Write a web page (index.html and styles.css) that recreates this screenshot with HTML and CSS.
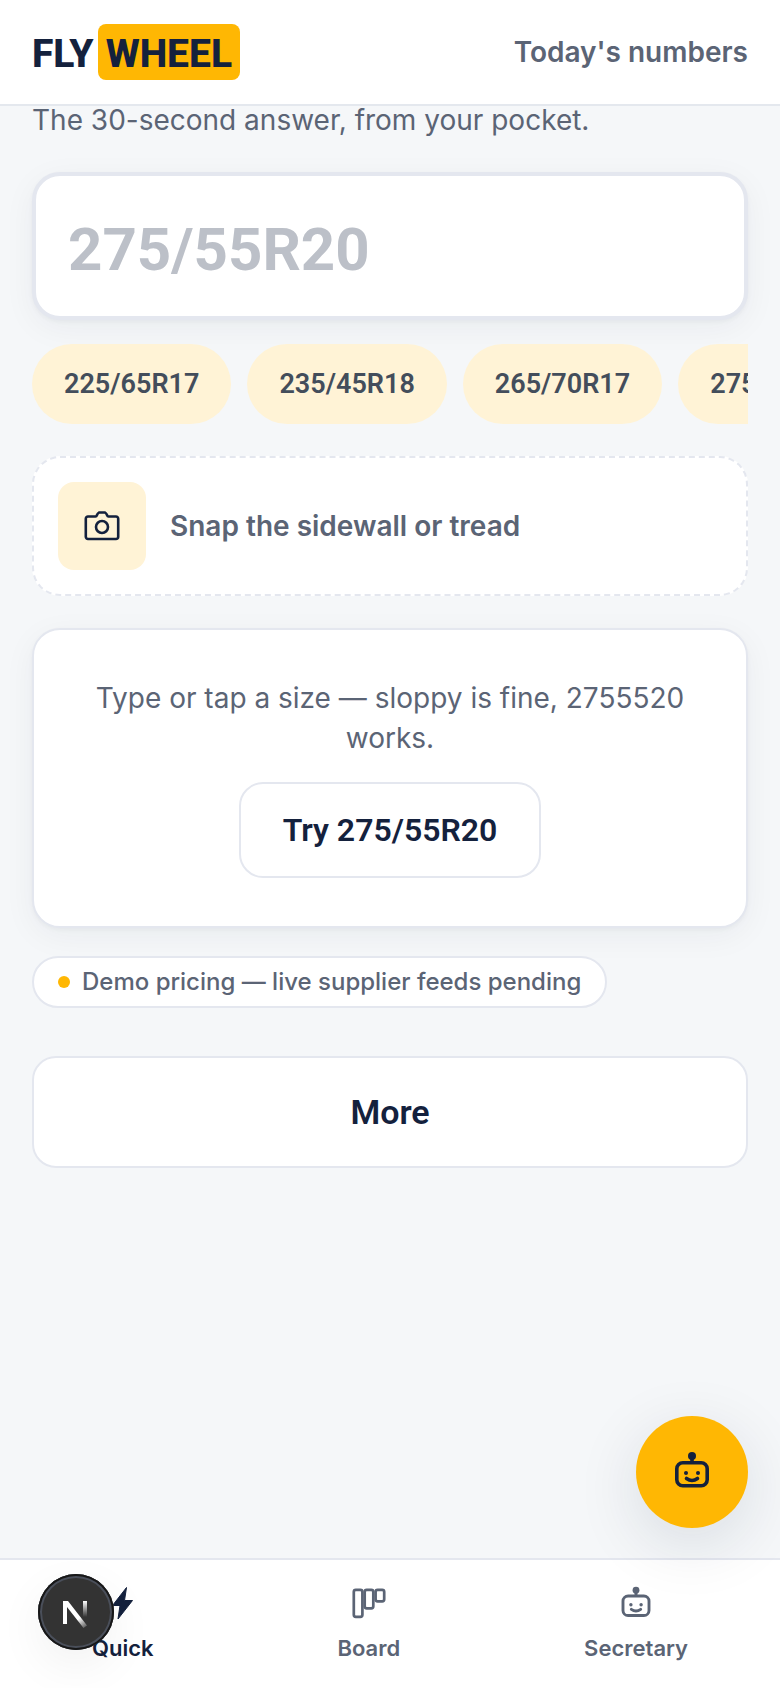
FILE: index.html
```html
<!DOCTYPE html>
<html lang="en">
<head>
    <meta charset="UTF-8">
    <meta name="viewport" content="width=device-width, initial-scale=1.0">
    <title>Flywheel</title>
    <link rel="stylesheet" href="styles.css">
</head>
<body>
    <header class="topbar">
        <a href="#" class="logo">FLY<span class="logo-mark">WHEEL</span></a>
        <a href="#numbers" class="topbar-link">Today's numbers</a>
    </header>

    <main class="content">
        <p class="tagline">The 30-second answer, from your pocket.</p>

        <input type="text" id="size" name="size" class="size-input" placeholder="275/55R20" aria-label="Tire size" autocomplete="off">

        <div class="chips">
            <button type="button" class="chip">225/65R17</button>
            <button type="button" class="chip">235/45R18</button>
            <button type="button" class="chip">265/70R17</button>
            <button type="button" class="chip">275/55R20</button>
        </div>

        <button type="button" class="snap">
            <span class="snap-icon">
                <svg width="40" height="40" viewBox="0 0 40 40" fill="none" stroke="currentColor" stroke-width="2.600" stroke-linejoin="round" aria-hidden="true">
                    <path d="M6 10.500h7.500q1 0 1.500-1.500t2-2.500h6q1.500 1 2 2.500t1.500 1.500H34a2.200 2.200 0 0 1 2.200 2.200v18A2.200 2.200 0 0 1 34 33H6a2.200 2.200 0 0 1-2.200-2.200v-18A2.200 2.200 0 0 1 6 10.500z"/>
                    <circle cx="20" cy="21" r="6"/>
                </svg>
            </span>
            Snap the sidewall or tread
        </button>

        <section class="card">
            <p>Type or tap a size — sloppy is fine, 2755520 works.</p>
            <button type="button" class="btn btn-try">Try 275/55R20</button>
        </section>

        <div class="status"><span class="dot"></span>Demo pricing — live supplier feeds pending</div>

        <button type="button" class="btn btn-more">More</button>
    </main>

    <nav class="tabbar">
        <a href="#quick" class="tab active">
            <svg width="34" height="34" viewBox="0 0 34 34" fill="currentColor" stroke="currentColor" stroke-linejoin="round" aria-hidden="true">
                <path d="M20.500 1.500L6.500 19.500h7.500l-2 13.500L26.500 14.500h-8z"/>
            </svg>
            Quick
        </a>
        <a href="#board" class="tab">
            <svg width="34" height="34" viewBox="0 0 34 34" fill="none" stroke="currentColor" stroke-width="2.700" aria-hidden="true">
                <rect x="1.800" y="3.800" width="8.600" height="27" rx="2"/>
                <rect x="12.700" y="3.800" width="8.600" height="18.500" rx="2"/>
                <rect x="23.600" y="3.800" width="8.600" height="11.500" rx="2"/>
            </svg>
            Board
        </a>
        <a href="#secretary" class="tab">
            <svg width="34" height="34" viewBox="0 0 40 40" fill="none" stroke="currentColor" stroke-width="3.400" stroke-linecap="round" aria-hidden="true">
                <rect x="4.700" y="11.700" width="30.600" height="23" rx="6"/>
                <path d="M20 5v6M14.500 27.500q5.500 4 11 0"/>
                <circle cx="20" cy="5" r="4" fill="currentColor" stroke="none"/>
                <circle cx="14" cy="22" r="2" fill="currentColor" stroke="none"/>
                <circle cx="26" cy="22" r="2" fill="currentColor" stroke="none"/>
            </svg>
            Secretary
        </a>
    </nav>

    <button type="button" class="fab" aria-label="Ask the secretary">
        <svg width="40" height="40" viewBox="0 0 40 40" fill="none" stroke="currentColor" stroke-width="3.600" stroke-linecap="round" aria-hidden="true">
            <rect x="4.800" y="10.800" width="30.400" height="23" rx="6"/>
            <path d="M20 4v6M14.500 26.500q5.500 4 11 0"/>
            <circle cx="20" cy="4" r="4" fill="currentColor" stroke="none"/>
            <circle cx="14" cy="21" r="2" fill="currentColor" stroke="none"/>
            <circle cx="26" cy="21" r="2" fill="currentColor" stroke="none"/>
        </svg>
    </button>

    <button type="button" class="dev-badge" aria-label="Open dev tools">
        <svg width="76" height="76" viewBox="0 0 76 76" fill="none" aria-hidden="true">
            <defs>
                <linearGradient id="slant" x1="34" y1="34" x2="49" y2="54" gradientUnits="userSpaceOnUse">
                    <stop offset="0.500" stop-color="#fff"/>
                    <stop offset="1" stop-color="#fff" stop-opacity="0.100"/>
                </linearGradient>
                <linearGradient id="stem" x1="47" y1="27" x2="47" y2="43" gradientUnits="userSpaceOnUse">
                    <stop stop-color="#fff"/>
                    <stop offset="1" stop-color="#fff" stop-opacity="0"/>
                </linearGradient>
            </defs>
            <path d="M25 27h5l19 24.500-3.500 2.500L29 33v17h-4z" fill="url(#slant)"/>
            <path d="M45 27h4v17h-4z" fill="url(#stem)"/>
        </svg>
    </button>
</body>
</html>
```
FILE: styles.css
```css
* {
    box-sizing: border-box;
}
body {
    margin: 0;
    min-height: 100vh;
    padding-bottom: 130px;
    background-color: #f5f7f9;
    color: #5b6475;
    font-family: Inter, sans-serif;
    font-size: 28px;
    line-height: 40px;
}
a {
    color: inherit;
    text-decoration: none;
}
button {
    font-family: inherit;
    cursor: pointer;
}
svg {
    display: block;
}
.topbar {
    position: sticky;
    top: 0;
    z-index: 5;
    display: flex;
    align-items: center;
    justify-content: space-between;
    padding: 24px 32px;
    background-color: #fff;
    border-bottom: 2px solid #e4e8ee;
}
.logo {
    display: flex;
    align-items: flex-end;
    gap: 4px;
    color: #14213d;
    font-family: Roboto, sans-serif;
    font-size: 39px;
    font-weight: 800;
    line-height: 52px;
}
.logo-mark {
    padding: 4px 8px 0;
    background-color: #ffb703;
    border-radius: 8px;
}
.topbar-link {
    font-weight: 600;
}
.content {
    display: flex;
    flex-direction: column;
    padding: 0 32px 32px;
}
.tagline {
    margin: 0 0 38px;
    line-height: 28px;
}
.size-input {
    width: 100%;
    height: 148px;
    padding: 6px 32px 0;
    background-color: #fff;
    border: 4px solid #e4e7ef;
    border-radius: 28px;
    box-shadow: 0 2px 4px rgba(20, 33, 61, 0.04), 0 8px 32px rgba(20, 33, 61, 0.05);
    color: #14213d;
    font-family: Roboto, sans-serif;
    font-size: 60px;
    font-weight: 700;
}
.size-input::placeholder {
    color: #bcc0c8;
    opacity: 1;
}
.chips {
    display: flex;
    gap: 16px;
    margin: 24px 0 32px;
    overflow-x: auto;
    scrollbar-width: none;
}
.chip {
    flex: none;
    height: 80px;
    padding: 0 32px;
    background-color: #fff3d6;
    border: none;
    border-radius: 40px;
    color: #434d5b;
    font-family: Roboto, sans-serif;
    font-size: 27px;
    font-weight: 600;
}
.snap {
    display: flex;
    align-items: center;
    gap: 24px;
    padding: 24px;
    background-color: #fff;
    border: 2px dashed #e4e7ef;
    border-radius: 28px;
    color: #5b6475;
    font-size: 28px;
    font-weight: 600;
}
.snap-icon {
    display: grid;
    place-items: center;
    width: 88px;
    height: 88px;
    background-color: #fff3d6;
    border-radius: 16px;
    color: #14213d;
}
.card {
    display: flex;
    flex-direction: column;
    align-items: center;
    gap: 24px;
    margin: 32px 0 28px;
    padding: 48px;
    background-color: #fff;
    border: 2px solid #e4e7ef;
    border-radius: 28px;
    box-shadow: 0 2px 4px rgba(20, 33, 61, 0.04), 0 8px 32px rgba(20, 33, 61, 0.05);
    text-align: center;
}
.card p {
    margin: 0;
}
.btn {
    background-color: #fff;
    border: 2px solid #e4e7ef;
    border-radius: 24px;
    color: #14213d;
    font-family: Roboto, sans-serif;
    font-weight: 600;
}
.btn-try {
    height: 96px;
    padding: 0 42px;
    font-size: 32px;
}
.btn-more {
    height: 112px;
    font-size: 34px;
}
.status {
    display: flex;
    align-items: center;
    align-self: flex-start;
    gap: 12px;
    margin-bottom: 48px;
    padding: 4px 24px;
    background-color: #fff;
    border: 2px solid #e4e7ef;
    border-radius: 26px;
    font-size: 24px;
    font-weight: 500;
}
.dot {
    width: 12px;
    height: 12px;
    background-color: #ffb703;
    border-radius: 50%;
}
.tabbar {
    position: fixed;
    right: 0;
    bottom: 0;
    left: 0;
    display: flex;
    justify-content: space-around;
    padding: 26px 0;
    background-color: #fff;
    border-top: 2px solid #e4e7ef;
}
.tab {
    display: flex;
    flex-direction: column;
    align-items: center;
    gap: 14px;
    font-size: 22px;
    font-weight: 600;
    line-height: 28px;
}
.tab.active {
    color: #14213d;
}
.fab {
    position: fixed;
    right: 32px;
    bottom: 160px;
    display: grid;
    place-items: center;
    width: 112px;
    height: 112px;
    padding: 0;
    background-color: #ffb703;
    border: none;
    border-radius: 50%;
    box-shadow: 0 16px 64px rgba(20, 33, 61, 0.12);
    color: #14213d;
}
.dev-badge {
    position: fixed;
    bottom: 38px;
    left: 38px;
    width: 76px;
    height: 76px;
    padding: 0;
    background-color: #333;
    border: none;
    border-radius: 50%;
    box-shadow: inset 0 0 0 2px #171717, inset 0 0 0 4px #4a4f5a, 0 16px 48px rgba(0, 0, 0, 0.06);
}
```
